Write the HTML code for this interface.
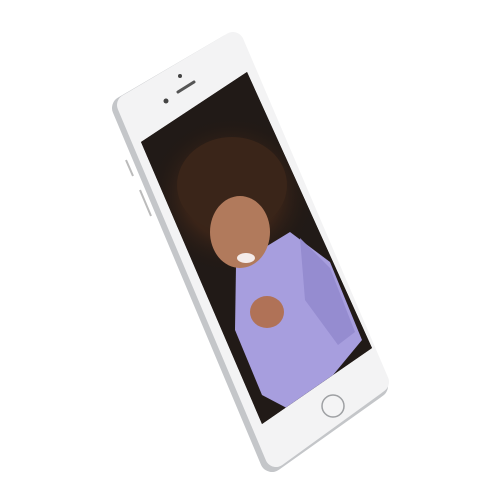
<!DOCTYPE html>
<html><head><style>html,body{margin:0;padding:0;background:#fff;width:500px;height:500px;overflow:hidden}</style></head>
<body>
<svg width="500" height="500" viewBox="0 0 500 500" xmlns="http://www.w3.org/2000/svg">
<defs>
<clipPath id="scr"><polygon points="141,142 247,72 372,348 262,424"/></clipPath>
<radialGradient id="hair" cx="0.5" cy="0.5" r="0.5"><stop offset="0.55" stop-color="#3a2418"/><stop offset="1" stop-color="#1e1714" stop-opacity="0"/></radialGradient>
</defs>
<path d="M126,106 L232,44 L378,384 L274,458 Z" fill="#c4c6c9" stroke="#c4c6c9" stroke-width="24" stroke-linejoin="round" transform="translate(-2,2)"/>
<path d="M128,105 L233,43 L378,382 L276,456 Z" fill="#f3f3f4" stroke="#f3f3f4" stroke-width="22" stroke-linejoin="round"/>
<line x1="126" y1="160" x2="133" y2="176" stroke="#bbb" stroke-width="2"/>
<line x1="140" y1="190" x2="151" y2="216" stroke="#bbb" stroke-width="2"/>
<polygon points="141,142 247,72 372,348 262,424" fill="#1f1917"/>
<g clip-path="url(#scr)">
<rect x="130" y="60" width="260" height="380" fill="#211a17"/>
<ellipse cx="232" cy="195" rx="85" ry="80" fill="url(#hair)"/>
<ellipse cx="232" cy="185" rx="55" ry="48" fill="#3a2519"/>
<path d="M236,265 L290,232 L330,262 L362,340 L300,415 L262,395 L235,330 Z" fill="#a79ede"/>
<path d="M300,238 L330,268 L355,332 L338,345 L305,300 Z" fill="#958cd0"/>
<ellipse cx="240" cy="232" rx="30" ry="36" fill="#b17a5c"/>
<ellipse cx="246" cy="258" rx="9" ry="5" fill="#f4ecea"/>
<ellipse cx="267" cy="312" rx="17" ry="16" fill="#b07257"/>
</g>
<line x1="178" y1="92" x2="194" y2="82" stroke="#555" stroke-width="3" stroke-linecap="round"/>
<circle cx="180" cy="76" r="2" fill="#444"/>
<circle cx="166" cy="101" r="2.5" fill="#444"/>
<circle cx="333" cy="406" r="11" fill="#f4f4f5" stroke="#9ea0a3" stroke-width="1.5"/>
</svg>
</body></html>
